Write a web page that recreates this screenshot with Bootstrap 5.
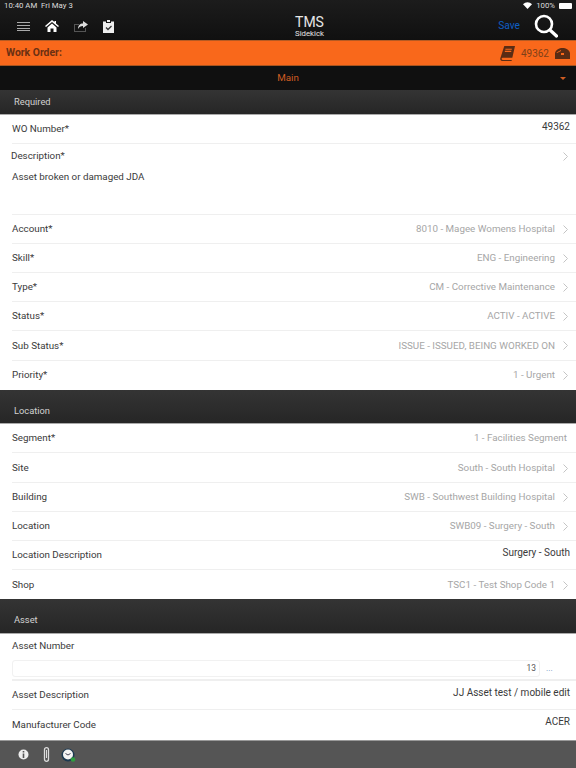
<!DOCTYPE html>
<html lang="en">
<head>
  <meta charset="UTF-8" />
  <meta name="viewport" content="width=device-width, initial-scale=1.0"/>
  <title>TMS Sidekick</title>
  <link href="https://cdn.jsdelivr.net/npm/bootstrap@5.3.0/dist/css/bootstrap.min.css" rel="stylesheet">
  <style>
    html, body {
      height: 768px;
      overflow: hidden;
    }
    body {
      background-color: #fff;
      font-family: Roboto, "Liberation Sans", Arial, sans-serif;
      font-size: 9.8px;
      color: #3a3a3a;
    }
    .app-shell {
      height: 768px;
    }
    .app-shell > * {
      flex-shrink: 0;
    }
    .top-head {
      height: 40px;
      background: linear-gradient(#1c1c1c, #101010);
      color: #fff;
    }
    .status-line {
      height: 10px;
      padding: 1px 4px 0 4px;
      font-size: 7.8px;
      line-height: 10px;
      color: #ddd;
    }
    .batt {
      width: 13px;
      height: 6px;
      background: #fff;
      border-radius: 1px;
    }
    .nav-line {
      height: 30px;
      padding: 2px 18px 0 17px;
    }
    .nav-left {
      width: 144px;
      gap: 15px;
    }
    .nav-right {
      width: 100px;
      gap: 14px;
    }
    .nav-title {
      line-height: 1;
      color: #e6e6e6;
    }
    .nav-title b {
      font-weight: 400;
      font-size: 14px;
      display: block;
    }
    .nav-title span {
      font-size: 7.8px;
      display: block;
      margin-top: 1px;
    }
    .save-link {
      color: #0f5fc4;
      font-size: 10.2px;
      text-decoration: none;
    }
    .wo-bar {
      height: 26px;
      background: #f9681b;
      color: #7d4019;
      padding: 0 6px;
      border-top: 1px solid #b65a22;
      border-bottom: 1px solid #a8541f;
    }
    .wo-bar strong {
      font-size: 10.4px;
      font-weight: 700;
      color: #6b3013;
    }
    .wo-num {
      font-size: 10px;
    }
    .main-pick {
      height: 24px;
      background: #101010;
      color: #cf5c22;
      padding: 0 10px;
    }
    .caret-down {
      width: 0;
      height: 0;
      margin-right: 10px;
      border-left: 3px solid transparent;
      border-right: 3px solid transparent;
      border-top: 3px solid #cf5c22;
    }
    .sec-head {
      background: linear-gradient(#343434, #262626);
      color: #d2d2d2;
      font-size: 9.3px;
      padding: 0 14px;
      height: 25px;
      border-bottom: 1px solid #aaa;
    }
    .sec-tall {
      height: 34.5px;
      padding: 14px 14px 0;
      line-height: 14px;
    }
    .form-rows {
      --bs-list-group-bg: #fff;
      --bs-list-group-border-color: transparent;
      --bs-list-group-item-padding-x: 0;
      --bs-list-group-item-padding-y: 0;
      --bs-list-group-color: #3a3a3a;
      margin-left: 12px;
      border-radius: 0;
    }
    .form-rows .list-group-item {
      height: 29.2px;
      border-width: 0 0 1px;
      border-color: #efefef;
      padding-top: 1px;
      padding-right: 6px;
      font-size: 9.8px;
    }
    .form-rows .list-group-item:last-child {
      border-bottom: 0;
    }
    .form-rows .wo-row {
      height: 28.6px;
    }
    .form-rows .desc-row {
      height: 71px;
      display: block;
      padding-top: 5.5px;
    }
    .form-rows .asset-row {
      height: 47px;
      display: block;
      padding-top: 5px;
      border-bottom-width: 2px;
    }
    .desc-label {
      margin-left: -1px;
    }
    .desc-chevron {
      margin-right: 2px;
    }
    .desc-text {
      margin-top: 6px;
      line-height: 13px;
    }
    .pick-val {
      color: #a6a6a6;
      margin-right: 2px;
    }
    .pick-val svg {
      margin-left: 8px;
    }
    .no-arrow {
      margin-right: 3px;
    }
    .plain-val {
      color: #3a3a3a;
      font-size: 10px;
      align-self: flex-start;
      margin-top: 4px;
      line-height: 14px;
    }
    .asset-line {
      margin-top: 6.5px;
    }
    .asset-input {
      height: 17px;
      width: 528px;
      border: 1px solid #f1f1f1;
      border-radius: 3px;
      font-size: 8.4px;
      line-height: 15px;
      padding-right: 3px;
      color: #555;
    }
    .more-dots {
      color: #6b8fc0;
      font-size: 8.4px;
      margin-left: 6px;
    }
    .foot-bar {
      height: 28px;
      background: #555;
      border-top: 1px solid #999;
      padding-left: 18px;
      gap: 14px;
    }
    .foot-clock {
      margin-left: -3px;
    }
  </style>
</head>
<body>
  <div class="app-shell d-flex flex-column">
    <div class="top-head">
      <div class="status-line d-flex justify-content-between align-items-center">
        <span>10:40 AM&nbsp;&nbsp;Fri May 3</span>
        <span class="d-flex align-items-center gap-1">
          <svg width="9" height="7" viewBox="0 0 18 14"><path fill="#fff" d="M9 14 0 4.500C5-1 13-1 18 4.500z"/></svg>
          100%
          <span class="batt"></span>
        </span>
      </div>
      <div class="nav-line d-flex justify-content-between align-items-center">
        <div class="nav-left d-flex align-items-center">
          <svg width="13" height="9" viewBox="0 0 13 9"><path stroke="#aaa" d="M0 .5h13M0 3.500h13M0 6.500h13M0 8.500h13"/></svg>
          <svg width="14" height="12" viewBox="0 0 14 12"><path fill="#fff" d="M7 0 0 6l1 1 6-5 6 5 1-1-3-2.600V1H9.500v1.100zM2.500 7.500 7 3.500l4.500 4V12H8.500V8.500h-3V12h-3z"/></svg>
          <svg width="14" height="11" viewBox="0 0 14 11"><path fill="#555" d="M0 3h5v1H1v6h10V7h1v4H0z"/><path fill="#ddd" d="M9 0l5 3.500L9 7V5C6.500 5 5 6 4 8c0-3.500 2-5.500 5-5.500z"/></svg>
          <svg width="11" height="13" viewBox="0 0 11 13"><path fill="#eee" d="M0 1.500h3V3h5V1.500h3V13H0z"/><path fill="#eee" d="M4 0h3v2H4z"/><path fill="none" stroke="#333" stroke-width="1.300" d="M3 7.500l2 2 3.500-3.500"/></svg>
        </div>
        <div class="nav-title text-center">
          <b>TMS</b>
          <span>Sidekick</span>
        </div>
        <div class="nav-right d-flex justify-content-end align-items-center">
          <a class="save-link" href="#">Save</a>
          <svg width="24" height="24" viewBox="0 0 24 24"><circle cx="10" cy="10" r="8" fill="none" stroke="#fff" stroke-width="2.600"/><path stroke="#fff" stroke-width="3.200" stroke-linecap="round" d="M16 16l6.500 6"/></svg>
        </div>
      </div>
    </div>

    <div class="wo-bar d-flex justify-content-between align-items-center">
      <strong>Work Order:</strong>
      <span class="d-flex align-items-center" style="gap:6px">
        <svg width="15" height="15" viewBox="0 0 14 14"><path fill="#5a2c14" d="M4 0h10l-2.500 11H2.500a1 1 0 0 0 0 2H11l-.2 1H2C.5 14 0 12.800.3 11.500z"/><path stroke="#f9681b" d="M5 3h6M4.500 5h6"/></svg>
        <span class="wo-num">49362</span>
        <svg width="15" height="11" viewBox="0 0 15 11"><path fill="#5a2c14" d="M0 5C1 1.500 4 0 7.500 0S14 1.500 15 5v6H0z"/><path fill="#f9681b" d="M6 5h3v2H6zM1.500 4.500 6 2v1L2 5z"/></svg>
      </span>
    </div>

    <div class="main-pick d-flex align-items-center position-relative">
      <span class="flex-grow-1 text-center">Main</span>
      <span class="caret-down position-absolute end-0"></span>
    </div>

    <div class="sec-head d-flex align-items-center">Required</div>
    <div class="list-group list-group-flush form-rows">
      <div class="list-group-item wo-row d-flex justify-content-between align-items-center"><span>WO Number*</span><span class="plain-val">49362</span></div>
      <div class="list-group-item desc-row">
        <div class="d-flex justify-content-between align-items-center">
          <span class="desc-label">Description*</span>
          <svg class="desc-chevron" width="5" height="9" viewBox="0 0 5 9"><path fill="none" stroke="#c4c4c4" d="M.5.500l4 4-4 4"/></svg>
        </div>
        <div class="desc-text">Asset broken or damaged JDA</div>
      </div>
      <div class="list-group-item d-flex justify-content-between align-items-center"><span>Account*</span><span class="pick-val d-flex align-items-center">8010 - Magee Womens Hospital<svg width="5" height="9" viewBox="0 0 5 9"><path fill="none" stroke="#c4c4c4" d="M.5.500l4 4-4 4"/></svg></span></div>
      <div class="list-group-item d-flex justify-content-between align-items-center"><span>Skill*</span><span class="pick-val d-flex align-items-center">ENG - Engineering<svg width="5" height="9" viewBox="0 0 5 9"><path fill="none" stroke="#c4c4c4" d="M.5.500l4 4-4 4"/></svg></span></div>
      <div class="list-group-item d-flex justify-content-between align-items-center"><span>Type*</span><span class="pick-val d-flex align-items-center">CM - Corrective Maintenance<svg width="5" height="9" viewBox="0 0 5 9"><path fill="none" stroke="#c4c4c4" d="M.5.500l4 4-4 4"/></svg></span></div>
      <div class="list-group-item d-flex justify-content-between align-items-center"><span>Status*</span><span class="pick-val d-flex align-items-center">ACTIV - ACTIVE<svg width="5" height="9" viewBox="0 0 5 9"><path fill="none" stroke="#c4c4c4" d="M.5.500l4 4-4 4"/></svg></span></div>
      <div class="list-group-item d-flex justify-content-between align-items-center"><span>Sub Status*</span><span class="pick-val d-flex align-items-center">ISSUE - ISSUED, BEING WORKED ON<svg width="5" height="9" viewBox="0 0 5 9"><path fill="none" stroke="#c4c4c4" d="M.5.500l4 4-4 4"/></svg></span></div>
      <div class="list-group-item d-flex justify-content-between align-items-center"><span>Priority*</span><span class="pick-val d-flex align-items-center">1 - Urgent<svg width="5" height="9" viewBox="0 0 5 9"><path fill="none" stroke="#c4c4c4" d="M.5.500l4 4-4 4"/></svg></span></div>
    </div>

    <div class="sec-head sec-tall">Location</div>
    <div class="list-group list-group-flush form-rows">
      <div class="list-group-item d-flex justify-content-between align-items-center"><span>Segment*</span><span class="pick-val no-arrow">1 - Facilities Segment</span></div>
      <div class="list-group-item d-flex justify-content-between align-items-center"><span>Site</span><span class="pick-val d-flex align-items-center">South - South Hospital<svg width="5" height="9" viewBox="0 0 5 9"><path fill="none" stroke="#c4c4c4" d="M.5.500l4 4-4 4"/></svg></span></div>
      <div class="list-group-item d-flex justify-content-between align-items-center"><span>Building</span><span class="pick-val d-flex align-items-center">SWB - Southwest Building Hospital<svg width="5" height="9" viewBox="0 0 5 9"><path fill="none" stroke="#c4c4c4" d="M.5.500l4 4-4 4"/></svg></span></div>
      <div class="list-group-item d-flex justify-content-between align-items-center"><span>Location</span><span class="pick-val d-flex align-items-center">SWB09 - Surgery - South<svg width="5" height="9" viewBox="0 0 5 9"><path fill="none" stroke="#c4c4c4" d="M.5.500l4 4-4 4"/></svg></span></div>
      <div class="list-group-item d-flex justify-content-between align-items-center"><span>Location Description</span><span class="plain-val">Surgery - South</span></div>
      <div class="list-group-item d-flex justify-content-between align-items-center"><span>Shop</span><span class="pick-val d-flex align-items-center">TSC1 - Test Shop Code 1<svg width="5" height="9" viewBox="0 0 5 9"><path fill="none" stroke="#c4c4c4" d="M.5.500l4 4-4 4"/></svg></span></div>
    </div>

    <div class="sec-head sec-tall">Asset</div>
    <div class="list-group list-group-flush form-rows">
      <div class="list-group-item asset-row">
        <div>Asset Number</div>
        <div class="asset-line d-flex align-items-center">
          <div class="asset-input text-end">13</div>
          <span class="more-dots">...</span>
        </div>
      </div>
      <div class="list-group-item d-flex justify-content-between align-items-center"><span>Asset Description</span><span class="plain-val">JJ Asset test / mobile edit</span></div>
      <div class="list-group-item d-flex justify-content-between align-items-center"><span>Manufacturer Code</span><span class="plain-val">ACER</span></div>
    </div>

    <div class="foot-bar d-flex align-items-center mt-auto">
      <svg width="11" height="11" viewBox="0 0 11 11"><circle cx="5.500" cy="5.500" r="5" fill="#eee"/><path stroke="#555" stroke-width="1.600" d="M5.500 4.500V9M5.500 2v1.500"/></svg>
      <svg width="7" height="15" viewBox="0 0 7 15"><rect x="1.500" y=".7" width="4" height="13.600" rx="2" fill="none" stroke="#ddd" stroke-width="1.300"/><path stroke="#ddd" d="M3.500 3v8"/></svg>
      <svg class="foot-clock" width="15" height="14" viewBox="0 0 15 14"><circle cx="7" cy="7" r="6.500" fill="#1d3a52"/><circle cx="7" cy="6.500" r="5" fill="#f4f4f4"/><path fill="none" stroke="#445" d="M4.500 5.500 7 7l2.500-1.500"/><circle cx="12" cy="11.500" r="2.300" fill="#2e9e3f"/></svg>
    </div>
  </div>
  <script src="https://cdn.jsdelivr.net/npm/bootstrap@5.3.0/dist/js/bootstrap.bundle.min.js"></script>
</body>
</html>
